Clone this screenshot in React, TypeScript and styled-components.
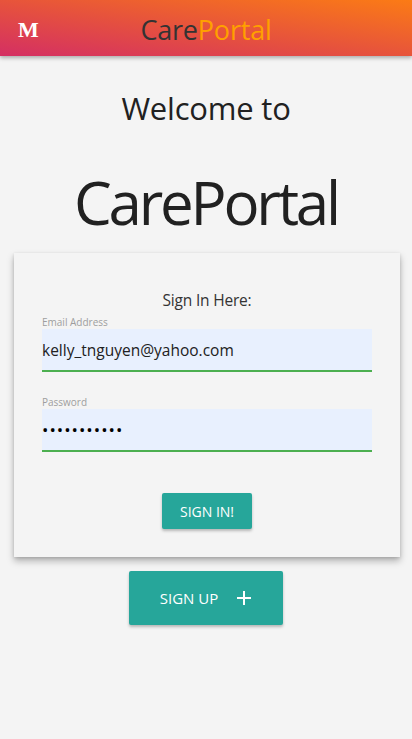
import React from "react";
import styled, { createGlobalStyle } from "styled-components";

const Global = createGlobalStyle`
  html, body { margin: 0; padding: 0; background: #f4f4f4; }
  body { font-family: "Open Sans", "Noto Sans", sans-serif; color: #212121; }
  * { box-sizing: border-box; }
`;

const Header = styled.header`
  height: 56px;
  display: flex;
  align-items: center;
  position: relative;
  background: linear-gradient(to top right, #d42f63 0%, #e5503f 45%, #fb7b15 100%);
  box-shadow: 0 2px 4px rgba(0,0,0,0.3);
`;

const Logo = styled.span`
  position: absolute;
  left: 18px;
  top: 17px;
  font-family: "Liberation Serif", "DejaVu Serif", serif;
  font-weight: bold;
  font-size: 22px;
  color: #fff;
`;

const Brand = styled.div`
  flex: 1;
  text-align: center;
  font-size: 27px;
  letter-spacing: -0.2px;
  color: #333;
  padding-top: 2px;
`;

const Accent = styled.span`
  color: #ffa000;
`;

const Main = styled.main`
  display: flex;
  flex-direction: column;
  align-items: center;
  min-height: 683px;
`;

const Welcome = styled.h2`
  margin: 30px 0 0;
  font-weight: 400;
  font-size: 31px;
  line-height: 44px;
  letter-spacing: -0.2px;
`;

const Title = styled.h1`
  margin: 34px 0 0;
  font-weight: 400;
  font-size: 60px;
  line-height: 76px;
  letter-spacing: -3.2px;
`;

const Card = styled.section`
  align-self: stretch;
  margin: 13px 12px 0 14px;
  padding: 36px 28px 28px;
  background: #f4f4f4;
  box-shadow: 0 4px 7px rgba(0,0,0,0.28), 0 1px 3px rgba(0,0,0,0.12);
  display: flex;
  flex-direction: column;
`;

const CardTitle = styled.div`
  text-align: center;
  font-size: 15.5px;
  color: #333;
  letter-spacing: -0.2px;
  margin-bottom: 5px;
`;

const Field = styled.div`
  display: flex;
  flex-direction: column;
  margin-bottom: ${(p: { $gap: number }) => p.$gap}px;
`;

const Label = styled.label`
  font-size: 10px;
  line-height: 13px;
  color: #9e9e9e;
`;

const Input = styled.input`
  height: 43px;
  border: none;
  border-bottom: 2px solid #4caf50;
  background: #e8f0fe;
  padding: 0;
  font-family: inherit;
  font-size: 15.5px;
  color: #212121;
  outline: none;
  letter-spacing: 0;
  &[type="password"] {
    font-size: 17px;
    letter-spacing: 1px;
    color: #000;
  }
`;

const Button = styled.button`
  background: #26a69a;
  color: #fff;
  border: none;
  border-radius: 2px;
  font-family: inherit;
  text-transform: uppercase;
  box-shadow: 0 2px 3px rgba(0,0,0,0.25);
  display: flex;
  align-items: center;
  justify-content: center;
  gap: 18px;
  cursor: pointer;
`;

const SignIn = styled(Button)`
  align-self: center;
  width: 90px;
  height: 36px;
  font-size: 14px;
  font-weight: 500;
  margin-top: 41px;
`;

const SignUp = styled(Button)`
  width: 154px;
  height: 54px;
  font-size: 15px;
  font-weight: 500;
  margin-top: 14px;
`;

const Footer = styled.footer`
  height: 3px;
  border-top: 1px solid #dcdcdc;
  background: #ececec;
`;

export default function App() {
  return (
    <>
      <Global />
      <Header>
        <Logo>M</Logo>
        <Brand>
          Care<Accent>Portal</Accent>
        </Brand>
      </Header>
      <Main>
        <Welcome>Welcome to</Welcome>
        <Title>CarePortal</Title>
        <Card>
          <CardTitle>Sign In Here:</CardTitle>
          <Field $gap={24}>
            <Label>Email Address</Label>
            <Input type="email" defaultValue="kelly_tnguyen@yahoo.com" />
          </Field>
          <Field $gap={0}>
            <Label>Password</Label>
            <Input type="password" defaultValue="kellypasswd" />
          </Field>
          <SignIn>Sign in!</SignIn>
        </Card>
        <SignUp>
          Sign up
          <svg width="16" height="16" viewBox="0 0 16 16">
            <path d="M8 1v14M1 8h14" stroke="#fff" strokeWidth="2" />
          </svg>
        </SignUp>
      </Main>
      <Footer />
    </>
  );
}
